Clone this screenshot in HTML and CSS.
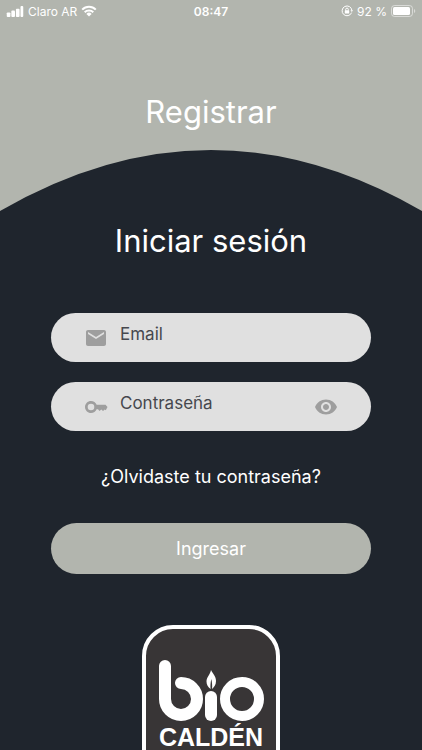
FILE: index.html
```html
<!DOCTYPE html>
<html lang="es">
<head>
    <meta charset="UTF-8">
    <meta name="viewport" content="width=device-width, initial-scale=1.0">
    <title>Iniciar sesión</title>
    <link rel="stylesheet" href="styles.css">
</head>
<body>

    <header class="top">
        <div class="status-bar">
            <div class="status-left">
                <svg class="signal" viewBox="0 0 18 12" aria-hidden="true">
                    <rect x="0" y="7" width="4" height="5" rx="1"/>
                    <rect x="5" y="5" width="4" height="7" rx="1"/>
                    <rect x="10" y="3" width="4" height="9" rx="1"/>
                    <rect x="15" y="0" width="3" height="12" rx="1"/>
                </svg>
                <span>Claro AR</span>
                <svg class="wifi" viewBox="0 0 16 12" aria-hidden="true">
                    <path d="M1.2 4.6a9.6 9.6 0 0 1 13.6 0M3.7 7.2a6.1 6.1 0 0 1 8.6 0"/>
                    <path class="wifi-dot" d="M8 11.5 5.4 8.9a3.7 3.7 0 0 1 5.2 0z"/>
                </svg>
            </div>
            <time class="clock">08:47</time>
            <div class="status-right">
                <svg class="lock" viewBox="0 0 12 12" aria-hidden="true">
                    <path d="M10.6 7.6A4.9 4.9 0 1 1 10.9 5.500M4.700 5.600V4.400a1.300 1.300 0 0 1 2.600 0v1.200"/>
                    <rect x="3.8" y="5.3" width="4.4" height="3.2" rx=".6"/>
                    <path class="arrow" d="M9.4 5.2H12L10.8 7z"/>
                </svg>
                <span>92 %</span>
                <svg class="battery" viewBox="0 0 25 12" aria-hidden="true">
                    <rect class="battery-case" x=".5" y=".5" width="21" height="11" rx="3"/>
                    <rect x="2" y="2" width="17" height="8" rx="1.5"/>
                    <path class="battery-tip" d="M23 4a2.2 2.2 0 0 1 0 4z"/>
                </svg>
            </div>
        </div>
        <button type="button" class="register-btn">Registrar</button>
    </header>

    <svg class="curve" viewBox="0 0 422 61" preserveAspectRatio="none" aria-hidden="true">
        <path d="M0 61Q211 -61 422 61z"/>
    </svg>

    <main class="login">
        <h1>Iniciar sesión</h1>

        <form class="login-form">
            <div class="field">
                <label for="email" aria-label="Email">
                    <svg class="icon" viewBox="0 0 24 24" aria-hidden="true">
                        <path d="M20 4H4c-1.1 0-2 .9-2 2v12c0 1.1.9 2 2 2h16c1.1 0 2-.9 2-2V6c0-1.1-.9-2-2-2zm0 4-8 5-8-5V6l8 5 8-5v2z"/>
                    </svg>
                </label>
                <input type="email" id="email" placeholder="Email">
            </div>

            <div class="field">
                <label for="password" aria-label="Contraseña">
                    <svg class="icon" viewBox="0 0 24 24" aria-hidden="true">
                        <path d="M12.600 9.700C11.800 7.500 9.600 6 7 6c-3.300 0-6 2.700-6 6s2.700 6 6 6c2.600 0 4.800-1.500 5.600-3.700H14l1.500 1.700 1.800-1.600L19 16l1.800-1.600 1 .8L23.500 12l-2-2.300zM7 15.300a3.300 3.300 0 1 1 0-6.600 3.300 3.300 0 0 1 0 6.600z"/>
                    </svg>
                </label>
                <input type="password" id="password" placeholder="Contraseña">
                <button type="button" class="show-btn" aria-label="Mostrar contraseña">
                    <svg class="icon" viewBox="0 0 24 24" aria-hidden="true">
                        <path d="M12 4.5C7 4.5 2.73 7.61 1 12c1.73 4.39 6 7.5 11 7.5s9.27-3.11 11-7.5c-1.73-4.39-6-7.5-11-7.5zM12 17c-2.76 0-5-2.24-5-5s2.24-5 5-5 5 2.24 5 5-2.24 5-5 5zm0-8c-1.66 0-3 1.34-3 3s1.34 3 3 3 3-1.34 3-3-1.34-3-3-3z"/>
                    </svg>
                </button>
            </div>

            <a href="#" class="forgot">¿Olvidaste tu contraseña?</a>

            <button type="submit" class="submit-btn">Ingresar</button>
        </form>

        <svg class="logo" viewBox="0 0 138 160" role="img" aria-label="bio Caldén">
            <rect class="logo-box" x="2" y="2" width="134" height="156" rx="29"/>
            <path class="logo-b" d="M23 41V74A16 16 0 1 0 39 58"/>
            <rect class="logo-fill" x="63" y="66" width="12" height="30" rx="6"/>
            <path class="logo-fill" d="M69 45C71 49 74 51 74 56C74 60 72 62 70 64C70.400 61 70.200 58 69.300 54C68.500 58 68.200 61 68.600 64C66 62 64.500 60 64.500 56.500C64.500 52 68 50 69 45z"/>
            <circle class="logo-o" cx="100" cy="74" r="17"/>
            <text class="logo-text" x="69" y="121">CALDÉN</text>
        </svg>
    </main>

</body>
</html>
```

FILE: styles.css
```css
* {
    box-sizing: border-box;
}

body {
    margin: 0;
    height: 100vh;
    overflow: hidden;
    font-family: Inter, "Liberation Sans", sans-serif;
    color: #fff;
    background-color: #1f252d;
}

button {
    padding: 0;
    border: none;
    background: none;
    font-family: inherit;
    color: inherit;
    cursor: pointer;
}

.top {
    display: flex;
    flex-direction: column;
    align-items: center;
    height: 150px;
    background-color: #b2b5ae;
}

.status-bar {
    display: grid;
    grid-template-columns: 1fr auto 1fr;
    align-items: center;
    width: 100%;
    height: 22px;
    padding: 0 6px;
    font-size: 12px;
}

.status-left,
.status-right {
    display: flex;
    align-items: center;
    gap: 4px;
}

.status-right {
    justify-content: flex-end;
}

.status-bar svg {
    fill: #fff;
}

.clock {
    font-weight: 600;
}

.signal {
    width: 18px;
    height: 11px;
}

.wifi {
    width: 16px;
    height: 12px;
}

.wifi path {
    fill: none;
    stroke: #fff;
    stroke-width: 2;
}

.wifi .wifi-dot {
    fill: #fff;
    stroke: none;
}

.lock {
    width: 12px;
    height: 12px;
}

.lock path {
    fill: none;
    stroke: #fff;
    stroke-width: 1;
}

.lock .arrow {
    fill: #fff;
    stroke: none;
}

.battery {
    width: 25px;
    height: 12px;
}

.status-bar .battery-case {
    fill: none;
    stroke: #fff;
    opacity: 0.5;
}

.battery-tip {
    opacity: 0.5;
}

.register-btn {
    margin-top: 72px;
    font-size: 31px;
    line-height: 36px;
}

.curve {
    display: block;
    width: 100%;
    height: 61px;
    background-color: #b2b5ae;
    fill: #1f252d;
}

.login {
    display: flex;
    flex-direction: column;
    align-items: center;
    padding: 12px 51px 0;
}

h1 {
    margin: 0;
    font-size: 31px;
    font-weight: 400;
    line-height: 36px;
}

.login-form {
    display: flex;
    flex-direction: column;
    align-items: center;
    width: 100%;
    margin-top: 54px;
}

.field {
    display: flex;
    align-items: center;
    width: 100%;
    height: 49px;
    margin-bottom: 20px;
    padding: 0 33px;
    border-radius: 25px;
    background-color: #e0e0e0;
}

.icon {
    display: block;
    width: 24px;
    height: 24px;
    fill: #9e9e9e;
}

.field input {
    flex: 1;
    min-width: 0;
    height: 49px;
    margin-left: 12px;
    padding: 0 0 8px;
    border: none;
    outline: none;
    background: none;
    font-family: inherit;
    font-size: 17px;
    color: #46484e;
}

.field input::placeholder {
    color: #46484e;
    opacity: 1;
}

.forgot {
    margin: 14px 0 34px;
    font-size: 18px;
    line-height: 24px;
    color: #fff;
    text-decoration: none;
}

.submit-btn {
    width: 100%;
    height: 51px;
    border-radius: 26px;
    background-color: #b2b5ae;
    font-size: 18px;
}

.logo {
    width: 138px;
    height: 160px;
    margin-top: 51px;
}

.logo-box {
    fill: #383536;
    stroke: #fff;
    stroke-width: 4;
}

.logo-b,
.logo-o {
    fill: none;
    stroke: #fff;
    stroke-width: 12;
    stroke-linecap: round;
}

.logo-o {
    stroke-width: 10;
}

.logo-fill {
    fill: #fff;
}

.logo-text {
    font-family: "Liberation Sans", Arial, sans-serif;
    font-size: 25px;
    font-weight: 700;
    text-anchor: middle;
    fill: #fff;
}
```
